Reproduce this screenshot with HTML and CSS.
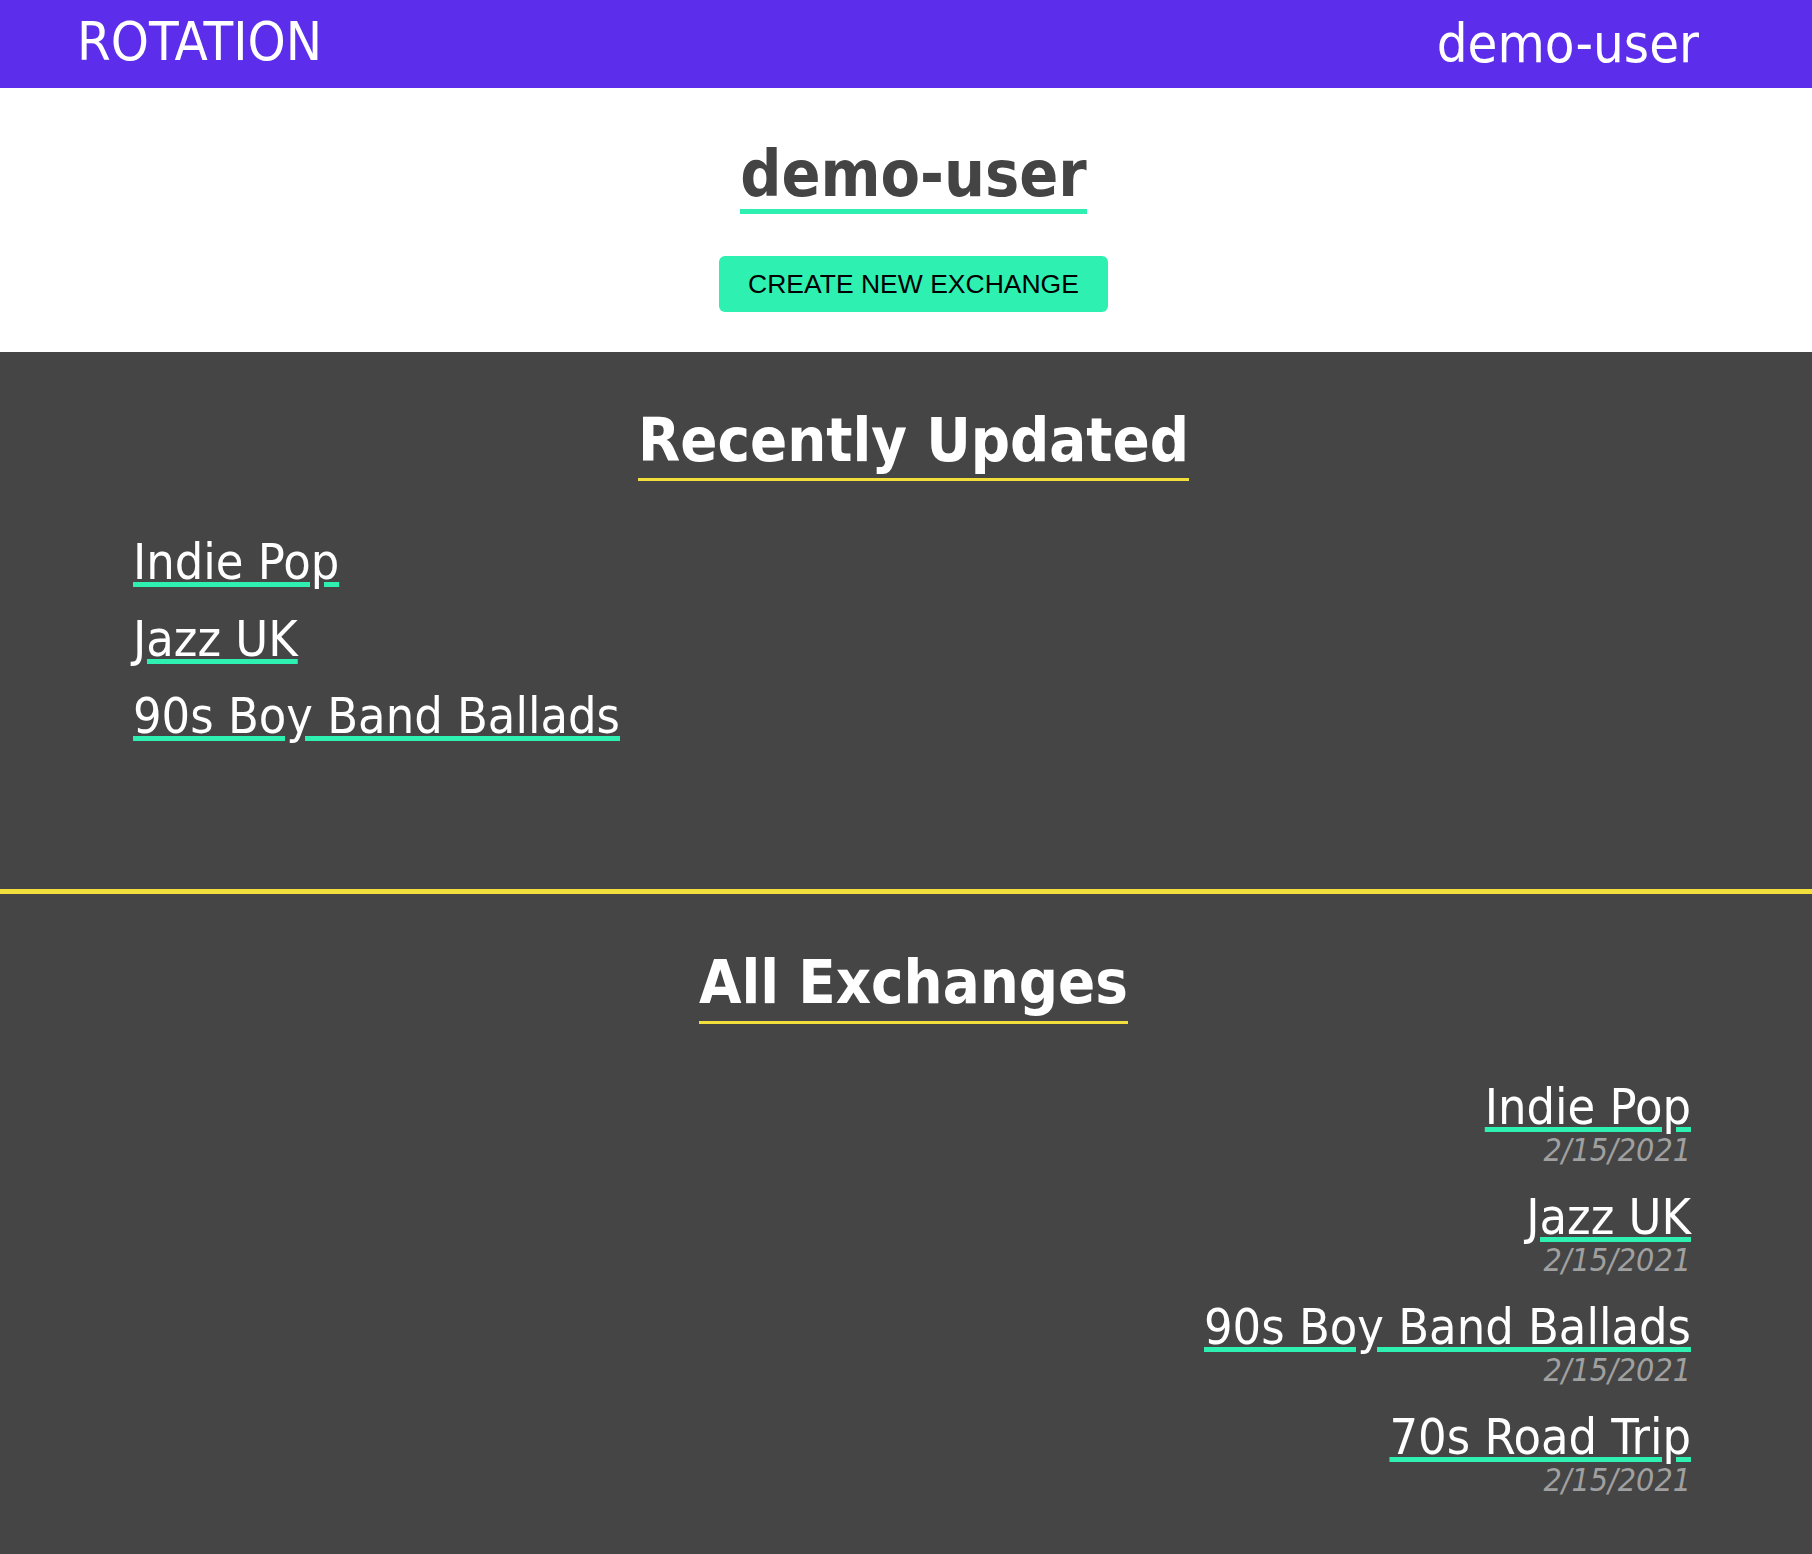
FILE: index.html
```html
<!DOCTYPE html>
<html lang="en">
<head>
<meta charset="utf-8">
<title>Rotation - demo-user</title>
<link rel="stylesheet" href="styles.css">
</head>
<body>
<header class="topbar">
  <a class="brand" href="#">ROTATION</a>
  <a class="nav-user" href="#">demo-user</a>
</header>
<section class="profile">
  <h1 class="profile-name">demo-user</h1>
  <div class="profile-actions">
    <button class="btn-create" type="button">CREATE NEW EXCHANGE</button>
  </div>
</section>
<section class="panel panel-recent">
  <div class="panel-head"><h2 class="panel-title">Recently Updated</h2></div>
  <ul class="recent-list">
    <li class="recent-item"><a class="ex-link" href="#">Indie Pop</a></li>
    <li class="recent-item"><a class="ex-link" href="#">Jazz UK</a></li>
    <li class="recent-item"><a class="ex-link" href="#">90s Boy Band Ballads</a></li>
  </ul>
</section>
<section class="panel panel-all">
  <div class="panel-head"><h2 class="panel-title">All Exchanges</h2></div>
  <ul class="all-list">
    <li class="all-item"><a class="ex-link" href="#">Indie Pop</a><span class="ex-date">2/15/2021</span></li>
    <li class="all-item"><a class="ex-link" href="#">Jazz UK</a><span class="ex-date">2/15/2021</span></li>
    <li class="all-item"><a class="ex-link" href="#">90s Boy Band Ballads</a><span class="ex-date">2/15/2021</span></li>
    <li class="all-item"><a class="ex-link" href="#">70s Road Trip</a><span class="ex-date">2/15/2021</span></li>
  </ul>
</section>
</body>
</html>
```
FILE: styles.css
```css
html, body {
  margin: 0;
  padding: 0;
}
body {
  font-family: "DejaVu Sans Condensed", "DejaVu Sans", sans-serif;
  font-stretch: condensed;
  background: #454545;
  min-height: 1554px;
}
a {
  color: inherit;
}
.topbar {
  height: 88px;
  background: #5c2deb;
  display: flex;
  justify-content: space-between;
  align-items: center;
  padding: 0 113px 0 77px;
  color: #ffffff;
}
.brand {
  font-size: 54px;
  line-height: 88px;
  text-decoration: none;
  margin-top: -4px;
}
.nav-user {
  font-size: 54px;
  line-height: 88px;
  text-decoration: none;
}
.profile {
  background: #ffffff;
  padding: 51px 0 40px 15px;
  display: flex;
  flex-direction: column;
  align-items: center;
}
.profile-name {
  margin: 0;
  font-size: 64px;
  line-height: 1.1;
  font-weight: bold;
  color: #444444;
  border-bottom: 5px solid #2ef0b1;
}
.profile-actions {
  margin-top: 42px;
}
.btn-create {
  font-family: "Liberation Sans", Arial, sans-serif;
  font-size: 26.5px;
  line-height: 56px;
  height: 56px;
  padding: 0 29px;
  border: none;
  border-radius: 6px;
  background: #2ef0b1;
  color: #000000;
  cursor: pointer;
}
.panel {
  background: #454545;
  color: #ffffff;
  padding-top: 54px;
}
.panel-recent {
  padding-bottom: 134px;
  border-bottom: 5px solid #f3df3b;
}
.panel-head {
  display: flex;
  justify-content: center;
  padding-left: 15px;
}
.panel-title {
  margin: 0;
  font-size: 61px;
  line-height: 1.1;
  font-weight: bold;
  padding-bottom: 5px;
  border-bottom: 3px solid #f3df3b;
}
.recent-list,
.all-list {
  list-style: none;
  margin: 0;
  padding: 0;
}
.recent-list {
  margin-top: 43px;
  padding-left: 133px;
}
.recent-item {
  font-size: 50px;
  line-height: 77px;
  height: 77px;
}
.ex-link {
  color: #ffffff;
  text-decoration: underline;
  text-decoration-color: #2ef0b1;
  text-decoration-thickness: 5px;
  text-underline-offset: 3px;
}
.all-list {
  margin-top: 58px;
  padding-right: 121px;
  display: flex;
  flex-direction: column;
  align-items: flex-end;
  gap: 24px;
}
.all-item {
  display: flex;
  flex-direction: column;
  align-items: flex-end;
}
.all-item .ex-link {
  font-size: 50px;
  line-height: 50px;
}
.ex-date {
  font-size: 32px;
  line-height: 36px;
  font-style: italic;
  color: #a0a0a0;
}
```
